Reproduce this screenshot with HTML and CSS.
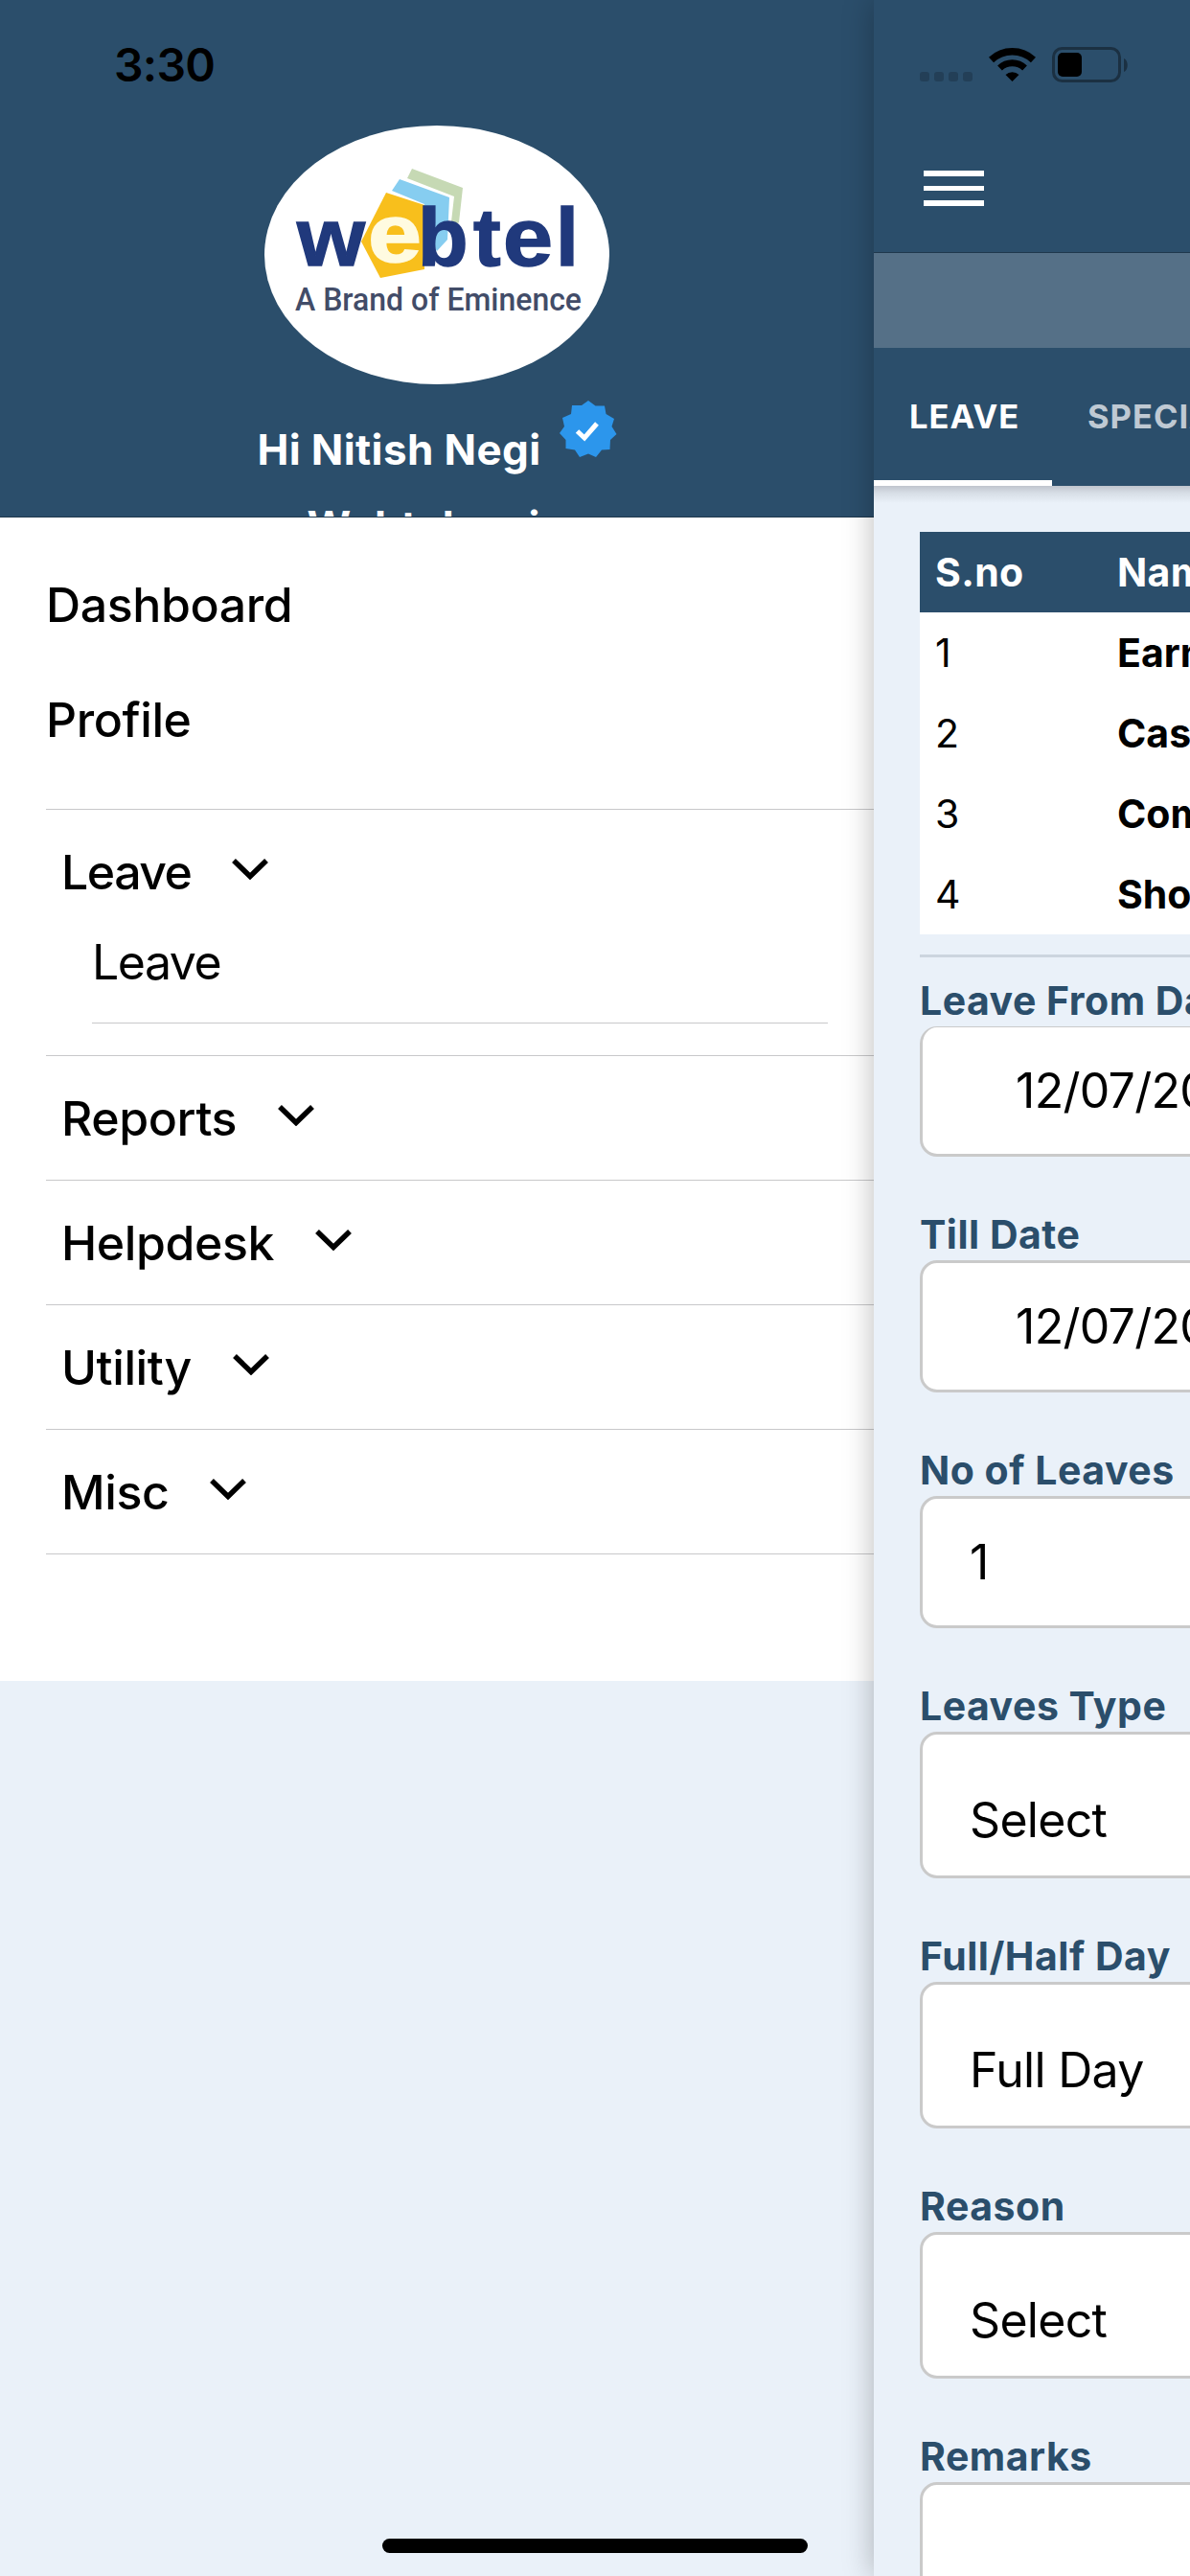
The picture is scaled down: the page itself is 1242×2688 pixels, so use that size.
FILE: index.html
```html
<!DOCTYPE html>
<html lang="en">
<head>
    <meta charset="UTF-8">
    <meta name="viewport" content="width=device-width, initial-scale=1.0">
    <title>Webtel - Leave</title>
    <link rel="stylesheet" href="styles.css">
</head>
<body>
    <div class="drawer">
        <div class="drawer-header">
            <div class="time">3:30</div>
            <svg class="logo" viewBox="276 131 360 270">
                <ellipse cx="456" cy="266" rx="180" ry="135" fill="#fff"/>
                <path d="M430 176L483 196L479 232L470 240L474 205L425 186Z" fill="#c6d9b4"/>
                <path d="M417 187L469 206L467 250L456 262L443 240L443 213L409 199Z" fill="#86cdf0"/>
                <path d="M403 201L443 214V281L397 290L377 252Z" fill="#f8bf1c"/>
                <g class="logo-name">
                    <text x="310" y="277" textLength="71" lengthAdjust="spacingAndGlyphs">w</text>
                    <text class="logo-e" x="384" y="273" textLength="56" lengthAdjust="spacingAndGlyphs">e</text>
                    <text x="436" y="277">b</text>
                    <text x="494" y="277">t</text>
                    <text x="525" y="277" textLength="52" lengthAdjust="spacingAndGlyphs">e</text>
                    <text x="580" y="277">l</text>
                </g>
                <text class="logo-tag" x="308" y="324" textLength="299" lengthAdjust="spacingAndGlyphs">A Brand of Eminence</text>
            </svg>
            <div class="user">
                <span>Hi Nitish Negi</span>
                <svg class="badge" viewBox="-30 -30 60 60">
                    <path d="M0 -30L7.500 -24.500L17 -24.500L18.500 -16L27 -11L24.500 -3L29.500 5L23 11L22.500 21L14 21.500L8 29L0 25.500L-9 29L-14 21.500L-23.500 20L-23.500 11L-30 4L-25 -3L-27 -12L-18 -16L-17 -25L-7 -25Z" fill="#2c96ec"/>
                    <path d="M-11.500 2L-4 9L9 -6" fill="none" stroke="#fff" stroke-width="5"/>
                </svg>
            </div>
            <div class="company">Webtel main</div>
        </div>
        <div class="menu">
            <div class="link">Dashboard</div>
            <div class="link">Profile</div>
            <div class="group open">
                <div class="group-title">Leave <svg class="chevron" viewBox="0 0 38 23"><path d="M2 3L19 19.500L36 3"/></svg></div>
                <div class="sub">Leave</div>
            </div>
            <div class="group">
                <div class="group-title">Reports <svg class="chevron" viewBox="0 0 38 23"><path d="M2 3L19 19.500L36 3"/></svg></div>
            </div>
            <div class="group">
                <div class="group-title">Helpdesk <svg class="chevron" viewBox="0 0 38 23"><path d="M2 3L19 19.500L36 3"/></svg></div>
            </div>
            <div class="group">
                <div class="group-title">Utility <svg class="chevron" viewBox="0 0 38 23"><path d="M2 3L19 19.500L36 3"/></svg></div>
            </div>
            <div class="group last">
                <div class="group-title">Misc <svg class="chevron" viewBox="0 0 38 23"><path d="M2 3L19 19.500L36 3"/></svg></div>
            </div>
        </div>
    </div>

    <div class="screen">
        <div class="navbar">
            <div class="status">
                <div class="dots"><i></i><i></i><i></i><i></i></div>
                <svg class="wifi" viewBox="0 0 49 36">
                    <path d="M2.500 13.500A32 32 0 0 1 46.500 13.500" fill="none" stroke="#000" stroke-width="7.500"/>
                    <path d="M11.500 22A19 19 0 0 1 37.500 22" fill="none" stroke="#000" stroke-width="7"/>
                    <path d="M24.500 36L17.500 29A10 10 0 0 1 31.500 29Z"/>
                </svg>
                <svg class="battery" viewBox="0 0 79 37">
                    <rect x="1.500" y="1.500" width="69" height="34" rx="9" fill="none" stroke="#1b3042" stroke-width="3"/>
                    <rect x="6" y="6" width="25" height="25" rx="5"/>
                    <path d="M75 12C80 14 80 24 75 26Z" fill="#1b3042"/>
                </svg>
            </div>
            <div class="hamburger"><i></i><i></i><i></i></div>
        </div>
        <div class="strip"></div>
        <div class="tabs">
            <div class="tab active">LEAVE</div>
            <div class="tab">SPECIAL LEAVE</div>
        </div>
        <div class="content">
            <table>
                <tr><th>S.no</th><th>Name</th></tr>
                <tr><td>1</td><td>Earned Leave</td></tr>
                <tr><td>2</td><td>Casual Leave</td></tr>
                <tr><td>3</td><td>Comp Off</td></tr>
                <tr><td>4</td><td>Short Leave</td></tr>
            </table>
            <form>
                <div class="field date first"><label>Leave From Date</label><div class="input">12/07/2023</div></div>
                <div class="field date"><label>Till Date</label><div class="input">12/07/2023</div></div>
                <div class="field"><label>No of Leaves</label><div class="input">1</div></div>
                <div class="field select"><label>Leaves Type</label><div class="input">Select</div></div>
                <div class="field select"><label>Full/Half Day</label><div class="input">Full Day</div></div>
                <div class="field select"><label>Reason</label><div class="input">Select</div></div>
                <div class="field select"><label>Remarks</label><div class="input"></div></div>
            </form>
        </div>
    </div>
    <div class="home-bar"></div>
</body>
</html>
```

FILE: styles.css
```css
* {
    box-sizing: border-box;
}
body {
    margin: 0;
    width: 1242px;
    height: 2688px;
    overflow: hidden;
    position: relative;
    display: flex;
    background: #eaf1f9;
    font-family: Inter, "Liberation Sans", sans-serif;
    color: #000;
    white-space: nowrap;
}

/* drawer */
.drawer {
    width: 912px;
    flex: none;
}
.drawer-header {
    height: 540px;
    background: #2b4e6b;
    border-bottom: 1px solid #1f384d;
    overflow: hidden;
    display: flex;
    flex-direction: column;
    align-items: center;
}
.time {
    align-self: flex-start;
    height: 131px;
    padding: 38px 0 0 119px;
    font-size: 48px;
    line-height: 60px;
    font-weight: 600;
    letter-spacing: -0.7px;
    flex: none;
}
.logo {
    width: 360px;
    height: 270px;
    flex: none;
}
.logo-name {
    font: bold 86px "Liberation Sans", Arial, sans-serif;
    fill: #20397c;
    stroke: #20397c;
    stroke-width: 1.5px;
}
.logo-e {
    fill: #fffbe0;
    stroke: #fffbe0;
}
.logo-tag {
    font: 500 33px Roboto, sans-serif;
    fill: #424c68;
}
.user {
    display: flex;
    align-items: flex-start;
    gap: 19px;
    height: 100px;
    padding-top: 17px;
    flex: none;
    color: #fff;
    font-size: 44px;
    font-weight: 700;
    letter-spacing: 0.4px;
}
.user span {
    line-height: 60px;
    padding-top: 21px;
}
.badge {
    width: 60px;
    height: 60px;
}
.company {
    color: #fff;
    font-size: 44px;
    line-height: 60px;
    margin-top: 18px;
    font-weight: 700;
    letter-spacing: 0.4px;
    flex: none;
}
.menu {
    height: 1214px;
    background: #fff;
    padding: 51px 0 0 48px;
    font-size: 50px;
    font-weight: 500;
    letter-spacing: -0.4px;
}
.link {
    height: 120px;
    line-height: 80px;
}
.link + .group {
    margin-top: 13px;
}
.group {
    border-top: 1px solid #c8c8ca;
    min-height: 130px;
    padding: 25px 0 0 16px;
}
.open {
    letter-spacing: -1.5px;
}
.last {
    border-bottom: 1px solid #c8c8ca;
    height: 131px;
}
.group-title {
    display: flex;
    align-items: flex-start;
    gap: 43px;
    line-height: 81px;
}
.chevron {
    width: 38px;
    height: 23px;
    margin-top: 25px;
}
.chevron path {
    fill: none;
    stroke: #000;
    stroke-width: 5.5;
}
.sub {
    margin: 0 48px 33px 32px;
    height: 117px;
    line-height: 107px;
    font-weight: 400;
    border-bottom: 1px solid #c8c8ca;
}

/* leave screen */
.screen {
    position: relative;
    width: 330px;
    flex: none;
    background: #eaf1f9;
    box-shadow: 0 0 30px rgba(0, 0, 0, 0.27);
}
.navbar {
    height: 264px;
    background: #2b4e6b;
    border-bottom: 1px solid #1f384d;
}
.status {
    height: 178px;
    padding: 49px 0 0 48px;
    display: flex;
    align-items: flex-start;
}
.dots {
    display: flex;
    gap: 5px;
    padding-top: 26px;
    margin-right: 17px;
}
.dots i {
    width: 10px;
    height: 10px;
    border-radius: 3px;
    background: #233f57;
}
.wifi {
    width: 49px;
    height: 36px;
    margin-right: 17px;
}
.battery {
    width: 79px;
    height: 37px;
}
.hamburger {
    width: 63px;
    margin-left: 52px;
    display: flex;
    flex-direction: column;
    gap: 10px;
}
.hamburger i {
    height: 5.5px;
    background: #fff;
}
.strip {
    height: 99px;
    background: #557087;
}
.tabs {
    height: 144px;
    display: flex;
    overflow: hidden;
    background: #2b4e6b;
    color: #bfc9d3;
    font-size: 34.5px;
    font-weight: 700;
    letter-spacing: 1px;
    line-height: 143px;
}
.tab {
    padding: 0 37px;
    flex: none;
}
.tab.active {
    width: 186px;
    color: #fff;
    border-bottom: 6px solid #fff;
}
.content {
    padding: 48px 0 0 48px;
    height: 2181px;
    overflow: hidden;
    background: linear-gradient(#bfc4cd, #d6dde5 7px, #eaf1f9 18px);
}
table {
    width: 700px;
    border-collapse: collapse;
    table-layout: fixed;
    background: #fff;
    font-size: 41px;
}
tr {
    height: 84px;
}
th, td {
    padding: 0 16px;
    text-align: left;
    line-height: 82px;
}
th {
    background: #2b4e6b;
    color: #fff;
    font-weight: 700;
    letter-spacing: 0.3px;
}
th:first-child, td:first-child {
    width: 190px;
}
td + td {
    font-weight: 700;
}
form {
    width: 700px;
    margin-top: 21px;
    border-top: 3px solid #ccd5df;
    padding-top: 16px;
}
.field {
    height: 246px;
}
.field label {
    display: block;
    height: 56px;
    line-height: 58px;
    color: #2b4e6b;
    font-size: 41px;
    font-weight: 700;
    letter-spacing: 0.5px;
}
.input {
    height: 138px;
    border: 3px solid #cacaca;
    border-radius: 18px;
    background: #fff;
    padding-left: 49px;
    font-size: 50px;
    line-height: 132px;
    letter-spacing: -0.7px;
}
.date .input {
    padding-left: 97px;
}
.first {
    height: 244px;
}
.first .input {
    height: 136px;
    border-top-width: 1px;
}
.select {
    height: 261px;
}
.select .input {
    height: 153px;
    padding-top: 23px;
}

.home-bar {
    position: absolute;
    left: 399px;
    top: 2649px;
    width: 444px;
    height: 15px;
    border-radius: 8px;
    background: #000;
}
```
